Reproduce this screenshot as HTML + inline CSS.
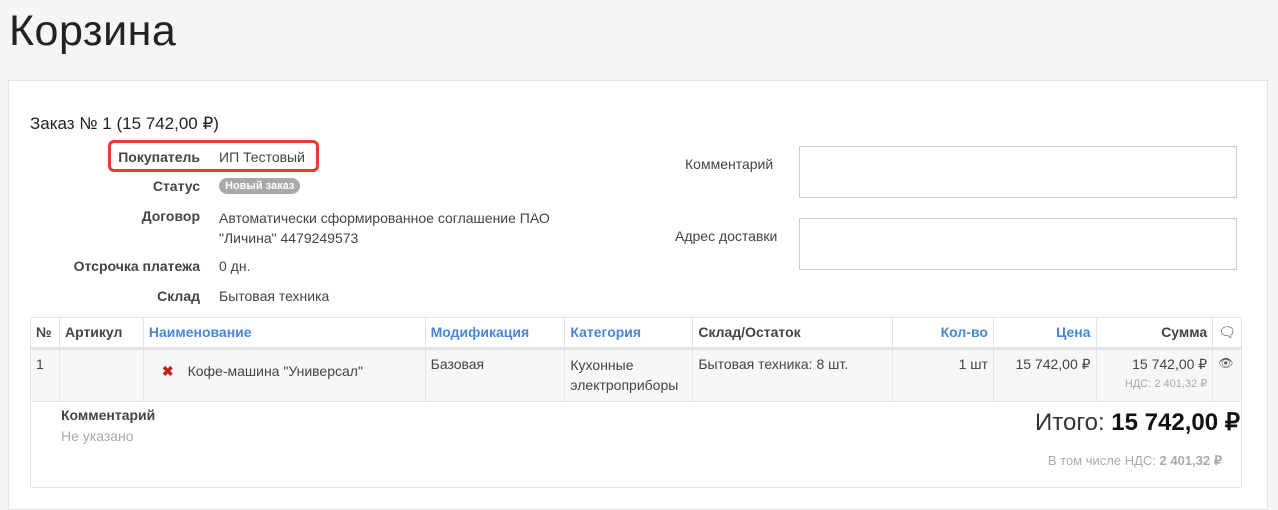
<!DOCTYPE html>
<html><head><meta charset="utf-8"><style>
*{margin:0;padding:0;box-sizing:border-box}
body{width:1278px;height:503px;background:#f4f5f6;font-family:"Liberation Sans",sans-serif;color:#333;font-size:14px;position:relative;overflow:hidden}
.a{position:absolute;white-space:nowrap}
h1{position:absolute;left:9px;top:7px;font-weight:300;font-size:43px;color:#222;letter-spacing:0.5px}
.panel{position:absolute;left:8px;top:80px;width:1260px;height:430px;background:#fff;border:1px solid #e2e3e5}
.lbl{font-weight:bold;color:#444;text-align:right;width:200px}
.box{position:absolute;border:1px solid #ccc;background:#fff}
table{position:absolute;left:30px;top:317px;width:1212px;border-collapse:collapse;font-size:14px}
td,th{border:1px solid #e3e4e6;padding:6px 5px;vertical-align:top;text-align:left}
th{font-weight:bold;height:31px;color:#444;border-bottom:3px solid #e3e4e6}
th.b{color:#4a86d8}
td{height:51px;background:#f6f7f8;color:#444}
.r{text-align:right}
</style></head><body>
<h1>Корзина</h1>
<div class="panel"></div>
<div class="a" style="left:30px;top:114px;font-size:17px;color:#222">Заказ № 1 (15 742,00 ₽)</div>
<div class="a" style="left:108px;top:140px;width:211px;height:32px;border:3px solid #e23c33;border-radius:6px"></div>
<div class="a lbl" style="left:0;top:149px">Покупатель</div>
<div class="a" style="left:219px;top:149px;color:#444">ИП Тестовый</div>
<div class="a lbl" style="left:0;top:178px">Статус</div>
<div class="a" style="left:219px;top:178px;background:#aaa;color:#fff;font-size:11px;font-weight:bold;padding:2px 6px;border-radius:9px">Новый заказ</div>
<div class="a lbl" style="left:0;top:208px">Договор</div>
<div class="a" style="left:219px;top:208px;color:#444;line-height:20px">Автоматически сформированное соглашение ПАО<br>"Личина" 4479249573</div>
<div class="a lbl" style="left:0;top:258px">Отсрочка платежа</div>
<div class="a" style="left:219px;top:258px;color:#444">0 дн.</div>
<div class="a lbl" style="left:0;top:288px">Склад</div>
<div class="a" style="left:219px;top:288px;color:#444">Бытовая техника</div>
<div class="a" style="left:685px;top:156px;color:#444">Комментарий</div>
<div class="box" style="left:799px;top:146px;width:438px;height:52px"></div>
<div class="a" style="left:675px;top:228px;color:#444">Адрес доставки</div>
<div class="box" style="left:799px;top:218px;width:438px;height:52px"></div>
<table>
<tr><th style="width:29px">№</th><th style="width:84px">Артикул</th><th class="b" style="width:283px">Наименование</th><th class="b" style="width:140px">Модификация</th><th class="b" style="width:128px">Категория</th><th style="width:201px">Склад/Остаток</th><th class="b r" style="width:101px">Кол-во</th><th class="b r" style="width:103px">Цена</th><th class="r" style="width:117px">Сумма</th><th style="font-weight:normal">&#x1F5E8;</th></tr>
<tr><td>1</td><td></td><td style="padding-top:13px;padding-left:18px"><span style="color:#b22;font-weight:bold;margin-right:14px">✖</span>Кофе-машина "Универсал"</td><td>Базовая</td><td style="line-height:20px;padding-top:5px">Кухонные электроприборы</td><td>Бытовая техника: 8 шт.</td><td class="r">1 шт</td><td class="r">15 742,00 ₽</td><td class="r">15 742,00 ₽<div style="font-size:11px;color:#aaa;margin-top:4px">НДС: 2 401,32 ₽</div></td><td style="color:#555;font-size:12px">👁</td></tr>
</table>
<div class="a" style="left:30px;top:400px;width:1212px;height:88px;border:1px solid #e3e4e6;border-top:none"></div>
<div class="a" style="left:61px;top:407px;font-weight:bold;color:#444">Комментарий</div>
<div class="a" style="left:61px;top:428px;color:#aaa">Не указано</div>
<div class="a" style="right:38px;top:408px;font-size:24px;color:#111"><span style="color:#333">Итого:</span> <b>15 742,00 ₽</b></div>
<div class="a" style="right:56px;top:453px;font-size:13px;color:#aaa">В том числе НДС: <b>2 401,32 ₽</b></div>
</body></html>
